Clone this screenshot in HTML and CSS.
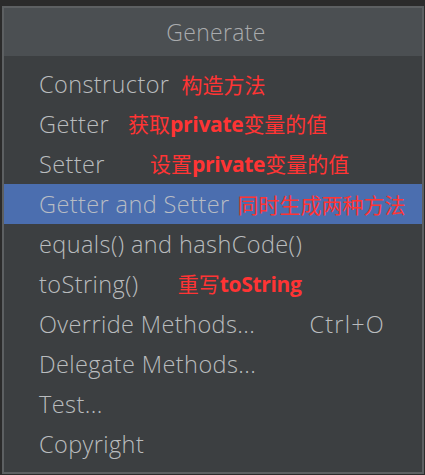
FILE: index.html
```html
<!DOCTYPE html>
<html lang="zh-CN">
<head>
<meta charset="utf-8">
<title>Generate</title>
<link rel="stylesheet" href="styles.css">
</head>
<body>
<div class="popup">
  <div class="header">Generate</div>
  <ul class="list">
    <li class="row"><span class="label">Constructor</span><span class="note n-ctor">构造方法</span></li>
    <li class="row"><span class="label">Getter</span><span class="note n-get">获取<b>private</b>变量的值</span></li>
    <li class="row"><span class="label">Setter</span><span class="note n-set">设置<b>private</b>变量的值</span></li>
    <li class="row selected"><span class="label">Getter and Setter</span><span class="note n-both">同时生成两种方法</span></li>
    <li class="row"><span class="label">equals() and hashCode()</span></li>
    <li class="row"><span class="label">toString()</span><span class="note n-str">重写<b>toString</b></span></li>
    <li class="row"><span class="label">Override Methods...</span><span class="shortcut">Ctrl+O</span></li>
    <li class="row"><span class="label">Delegate Methods...</span></li>
    <li class="row"><span class="label">Test...</span></li>
    <li class="row"><span class="label">Copyright</span></li>
  </ul>
</div>
</body>
</html>
```
FILE: styles.css
```css
html, body {
  margin: 0;
  padding: 0;
  background: #2b2b2b;
  height: 100%;
}

body {
  font-family: "Open Sans", "Noto Sans", sans-serif;
  overflow: hidden;
}

.popup {
  margin: 6px 1px 0 2px;
  border: 2px solid #5d6062;
  background: #3c3f41;
}

.header {
  height: 48px;
  display: flex;
  align-items: center;
  justify-content: center;
  background: #4b4f52;
  color: #a9abad;
  font-size: 23px;
  font-weight: 300;
  letter-spacing: 0.3px;
  padding-left: 6px;
}

.list {
  list-style: none;
  margin: 0;
  padding: 8px 0;
}

.row {
  height: 40px;
  display: flex;
  align-items: center;
  padding: 0 38px 0 35px;
  color: #b9bcbe;
  font-size: 23.5px;
  font-weight: 300;
  letter-spacing: 0.4px;
  white-space: nowrap;
}

.row.selected {
  background: #4b6eaf;
  color: #b7bcc4;
}

.note {
  font-family: "Noto Sans CJK SC", "Microsoft YaHei", sans-serif;
  color: #ff3434;
  font-size: 21px;
  font-weight: 400;
  letter-spacing: 0;
  line-height: 1;
}

.note b {
  font-family: "Open Sans", "Noto Sans CJK SC", sans-serif;
  font-weight: 700;
  letter-spacing: -0.3px;
}

.n-ctor { margin-left: 12px; }
.n-get { margin-left: 19px; }
.n-set { margin-left: 45px; }
.n-both { margin-left: 8px; }
.n-str { margin-left: 39px; }

.shortcut {
  margin-left: auto;
  margin-right: -1px;
  letter-spacing: 1.2px;
}
```
